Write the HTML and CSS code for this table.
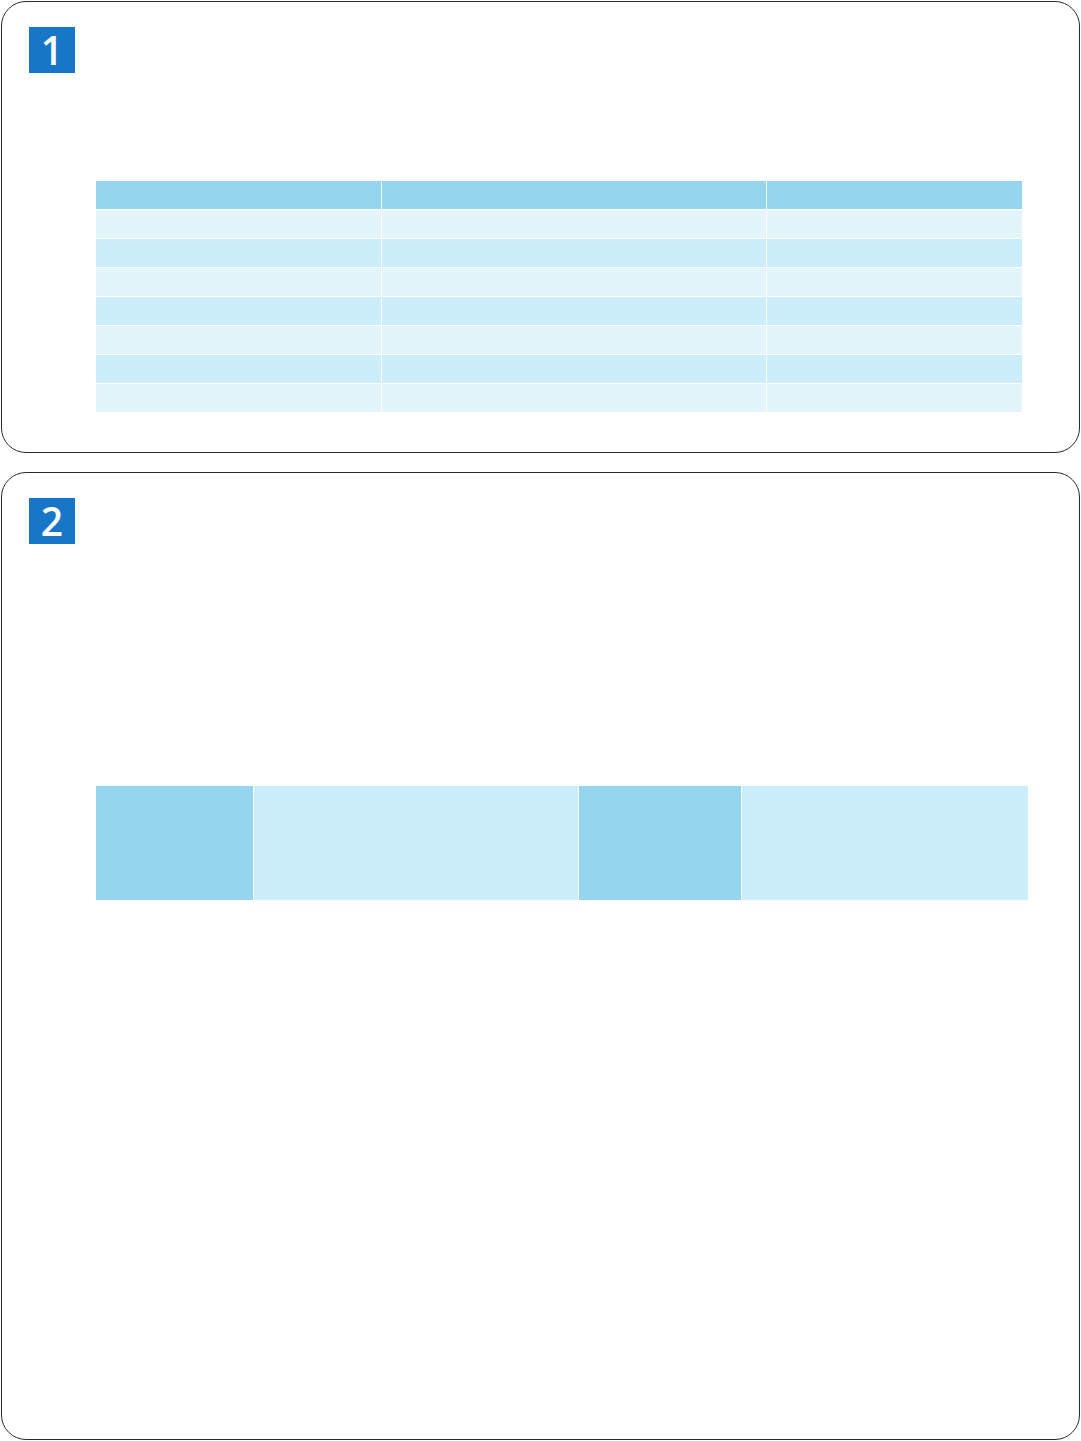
FILE: index.html
```html
<!DOCTYPE html>
<html>
<head>
<meta charset="utf-8">
<link rel="stylesheet" href="styles.css">
</head>
<body>
<section class="panel panel-one">
  <div class="badge">1</div>
  <div class="table table-one">
    <div class="cell head"></div><div class="cell head"></div><div class="cell head"></div>
    <div class="cell odd"></div><div class="cell odd"></div><div class="cell odd"></div>
    <div class="cell even"></div><div class="cell even"></div><div class="cell even"></div>
    <div class="cell odd"></div><div class="cell odd"></div><div class="cell odd"></div>
    <div class="cell even"></div><div class="cell even"></div><div class="cell even"></div>
    <div class="cell odd"></div><div class="cell odd"></div><div class="cell odd"></div>
    <div class="cell even"></div><div class="cell even"></div><div class="cell even"></div>
    <div class="cell odd"></div><div class="cell odd"></div><div class="cell odd"></div>
  </div>
</section>
<section class="panel panel-two">
  <div class="badge">2</div>
  <div class="table table-two">
    <div class="cell head"></div><div class="cell even"></div><div class="cell head"></div><div class="cell even"></div>
  </div>
</section>
</body>
</html>
```
FILE: styles.css
```css
html, body {
  margin: 0;
  padding: 0;
  background: #ffffff;
}
body {
  font-family: "Open Sans", "DejaVu Sans", sans-serif;
  padding: 1px 1px 0 1px;
}
.panel {
  box-sizing: border-box;
  width: 1079px;
  border: 1.5px solid #2a2a2a;
  border-radius: 25px;
  padding: 25px 0 0 27px;
  display: flex;
  flex-direction: column;
  align-items: flex-start;
}
.panel-one {
  height: 452px;
}
.panel-two {
  margin-top: 19px;
  height: 968px;
}
.badge {
  width: 46px;
  height: 46px;
  background: #1776c8;
  color: #ffffff;
  font-size: 39px;
  line-height: 46px;
  text-align: center;
  font-weight: 600;
}
.table {
  display: grid;
  gap: 1px;
  background: #ffffff;
  margin-left: 67px;
}
.table-one {
  margin-top: 108px;
  grid-template-columns: 285px 384px 255px;
  grid-auto-rows: 28px;
}
.table-two {
  margin-top: 242px;
  grid-template-columns: 157px 324px 162px 286px;
  grid-auto-rows: 114px;
}
.head { background: #95d5f0; }
.odd { background: #e3f4fb; }
.even { background: #cbeefa; }
```
